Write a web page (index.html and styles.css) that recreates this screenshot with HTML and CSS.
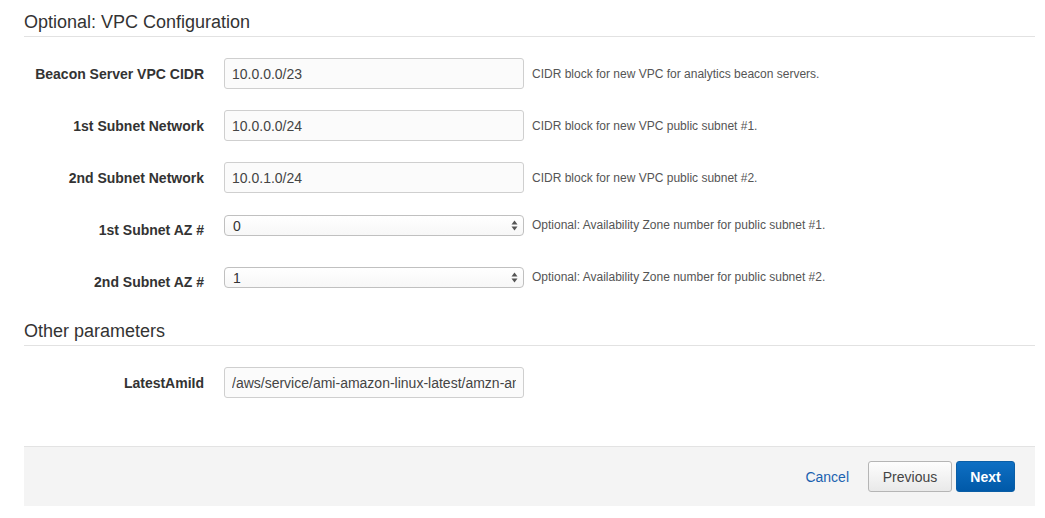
FILE: index.html
```html
<!DOCTYPE html>
<html>
<head>
<meta charset="utf-8">
<link rel="stylesheet" href="styles.css">
</head>
<body>
<div class="page">
  <h2 class="section-title">Optional: VPC Configuration</h2>
  <div class="form-row">
    <label class="label">Beacon Server VPC CIDR</label>
    <input class="text-input" type="text" value="10.0.0.0/23">
    <span class="help">CIDR block for new VPC for analytics beacon servers.</span>
  </div>
  <div class="form-row">
    <label class="label">1st Subnet Network</label>
    <input class="text-input" type="text" value="10.0.0.0/24">
    <span class="help">CIDR block for new VPC public subnet #1.</span>
  </div>
  <div class="form-row">
    <label class="label">2nd Subnet Network</label>
    <input class="text-input" type="text" value="10.0.1.0/24">
    <span class="help">CIDR block for new VPC public subnet #2.</span>
  </div>
  <div class="form-row row-select">
    <label class="label">1st Subnet AZ #</label>
    <div class="select">
      <span class="select-value">0</span>
      <svg class="arrows" width="7" height="11" viewBox="0 0 7 11"><path d="M3.5 0.5 L6.5 4.5 L0.5 4.5 Z M3.5 10.5 L6.5 6.5 L0.5 6.5 Z" fill="#555"/></svg>
    </div>
    <span class="help">Optional: Availability Zone number for public subnet #1.</span>
  </div>
  <div class="form-row row-select">
    <label class="label">2nd Subnet AZ #</label>
    <div class="select">
      <span class="select-value">1</span>
      <svg class="arrows" width="7" height="11" viewBox="0 0 7 11"><path d="M3.5 0.5 L6.5 4.5 L0.5 4.5 Z M3.5 10.5 L6.5 6.5 L0.5 6.5 Z" fill="#555"/></svg>
    </div>
    <span class="help">Optional: Availability Zone number for public subnet #2.</span>
  </div>

  <h2 class="section-title second">Other parameters</h2>
  <div class="form-row">
    <label class="label">LatestAmiId</label>
    <input class="text-input" type="text" value="/aws/service/ami-amazon-linux-latest/amzn-ami-hvm-x86_64-gp2">
  </div>

  <div class="footer">
    <a class="cancel" href="#">Cancel</a>
    <button class="btn btn-secondary">Previous</button>
    <button class="btn btn-primary">Next</button>
  </div>
</div>
</body>
</html>
```
FILE: styles.css
```css
html, body {
  margin: 0;
  padding: 0;
  background: #fff;
}
body {
  font-family: "Liberation Sans", Arial, Helvetica, sans-serif;
  color: #333;
}
.page {
  width: 1011px;
  margin-left: 24px;
  padding-top: 11px;
}
.section-title {
  margin: 0;
  font-size: 18px;
  font-weight: normal;
  color: #333;
  line-height: 22px;
  padding-bottom: 3px;
  border-bottom: 1px solid #e2e2e2;
  margin-bottom: 21px;
}
.section-title.second {
  margin-top: 23px;
}
.form-row {
  display: flex;
  align-items: center;
  height: 31px;
  margin-bottom: 21px;
}
.label {
  width: 180px;
  text-align: right;
  font-size: 14px;
  font-weight: bold;
  color: #333;
  margin-right: 20px;
  flex: none;
}
.text-input {
  box-sizing: border-box;
  width: 300px;
  height: 31px;
  border: 1px solid #cfcfcf;
  border-radius: 3px;
  background: #fbfbfb;
  padding: 0 7px;
  font-family: "Liberation Sans", Arial, sans-serif;
  font-size: 14px;
  color: #444;
  flex: none;
  outline: none;
}
.help {
  margin-left: 8px;
  font-size: 12px;
  color: #555;
}
.row-select {
  align-items: flex-start;
}
.row-select .label {
  align-self: center;
}
.row-select .help {
  line-height: 21px;
  margin-top: 1px;
}
.select {
  box-sizing: border-box;
  width: 300px;
  height: 21px;
  margin-top: 1px;
  border: 1px solid #c0c0c0;
  border-radius: 4px;
  background: linear-gradient(#ffffff, #f7f7f7);
  display: flex;
  align-items: center;
  justify-content: space-between;
  padding: 0 5px 0 8px;
  flex: none;
}
.select-value {
  font-size: 14px;
  color: #333;
}
.arrows {
  display: block;
}
.footer {
  margin-top: 48px;
  height: 60px;
  box-sizing: border-box;
  border-top: 1px solid #e3e3e3;
  background: #f4f4f4;
  display: flex;
  align-items: center;
  justify-content: flex-end;
  padding-right: 20px;
}
.cancel {
  font-size: 14px;
  color: #1a62b0;
  text-decoration: none;
  margin-right: 19px;
}
.btn {
  box-sizing: border-box;
  height: 31px;
  border-radius: 3px;
  font-family: "Liberation Sans", Arial, sans-serif;
  font-size: 14px;
  padding: 0 13px;
  cursor: pointer;
}
.btn-secondary {
  width: 84px;
  border: 1px solid #b5b5b5;
  background: linear-gradient(#fdfdfd, #e9e9e9);
  color: #444;
  margin-right: 4px;
}
.btn-primary {
  width: 59px;
  border: 1px solid #0a5ea6;
  background: linear-gradient(#0e6fc3, #0059a8);
  color: #fff;
  font-weight: bold;
}
```
